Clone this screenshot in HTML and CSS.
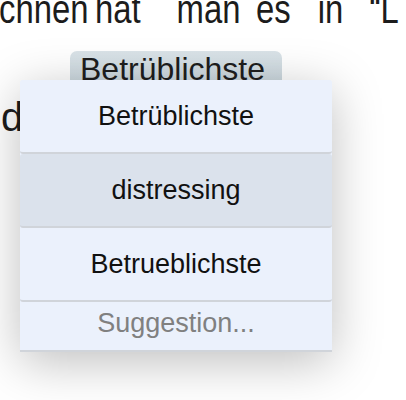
FILE: index.html
```
<!DOCTYPE html>
<html lang="de">
<head>
<meta charset="utf-8">
<title>Suggestions</title>
<link rel="stylesheet" href="styles.css">
</head>
<body>
<div class="page">
  <p class="para">
    <span class="line l1"><span class="w w1">chnen</span> <span class="w w2">hat</span> <span class="w w3">man</span> <span class="w w4">es</span> <span class="w w5">in</span> <span class="w">“L</span></span>
    <span class="line l2"><mark class="word">Betrüblichste</mark></span>
    <span class="line l3">d</span>
  </p>
  <ul class="menu">
    <li class="item">Betrüblichste</li>
    <li class="item hover">distressing</li>
    <li class="item">Betrueblichste</li>
    <li class="item hint">Suggestion...</li>
  </ul>
</div>
</body>
</html>
```
FILE: styles.css
```
html, body {
  margin: 0;
  padding: 0;
  background: #ffffff;
}
body {
  width: 406px;
  height: 400px;
  overflow: hidden;
  font-family: "Liberation Sans", Arial, sans-serif;
}
.page {
  position: relative;
  width: 406px;
  height: 400px;
  overflow: hidden;
}
.para {
  margin: -18px 0 0 0;
  font-size: 40px;
  line-height: 54px;
  color: #1c1c1c;
}
.line {
  display: block;
  height: 54px;
  white-space: nowrap;
}
.l1 {
  display: flex;
  margin-left: -1px;
  transform: scaleX(0.82);
  transform-origin: 0 0;
}
.w {
  flex: none;
}
.w1 { margin-right: 8px; }
.w2 { margin-right: 44px; }
.w3 { margin-right: 19px; }
.w4 { margin-right: 33px; }
.w5 { margin-right: 32px; }
.l2 {
  padding-left: 70px;
}
.word {
  display: inline-block;
  vertical-align: -3px;
  font-size: 32px;
  line-height: 37px;
  padding: 0 17px 6px 10px;
  color: #1e1e1e;
  border-radius: 7px;
  background: linear-gradient(#dae3e8, #c7d4db);
}
.l3 {
  padding-left: 1px;
}
.menu {
  position: absolute;
  left: 20px;
  top: 80px;
  width: 312px;
  margin: 0;
  padding: 0;
  list-style: none;
  border-radius: 4px 4px 0 0;
  background: #ebf1fc;
  box-shadow: 0 10px 50px rgba(0, 0, 0, 0.26);
}
.item {
  display: flex;
  align-items: center;
  justify-content: center;
  height: 72px;
  border-bottom: 2px solid #d0d4da;
  border-radius: 3px;
  background: #ebf1fc;
  font-size: 27px;
  color: #111111;
}
.item.hover {
  background: #dbe2ec;
}
.item.hint {
  height: 42px;
  padding-bottom: 6px;
  color: #808080;
  border-radius: 0;
}
```
